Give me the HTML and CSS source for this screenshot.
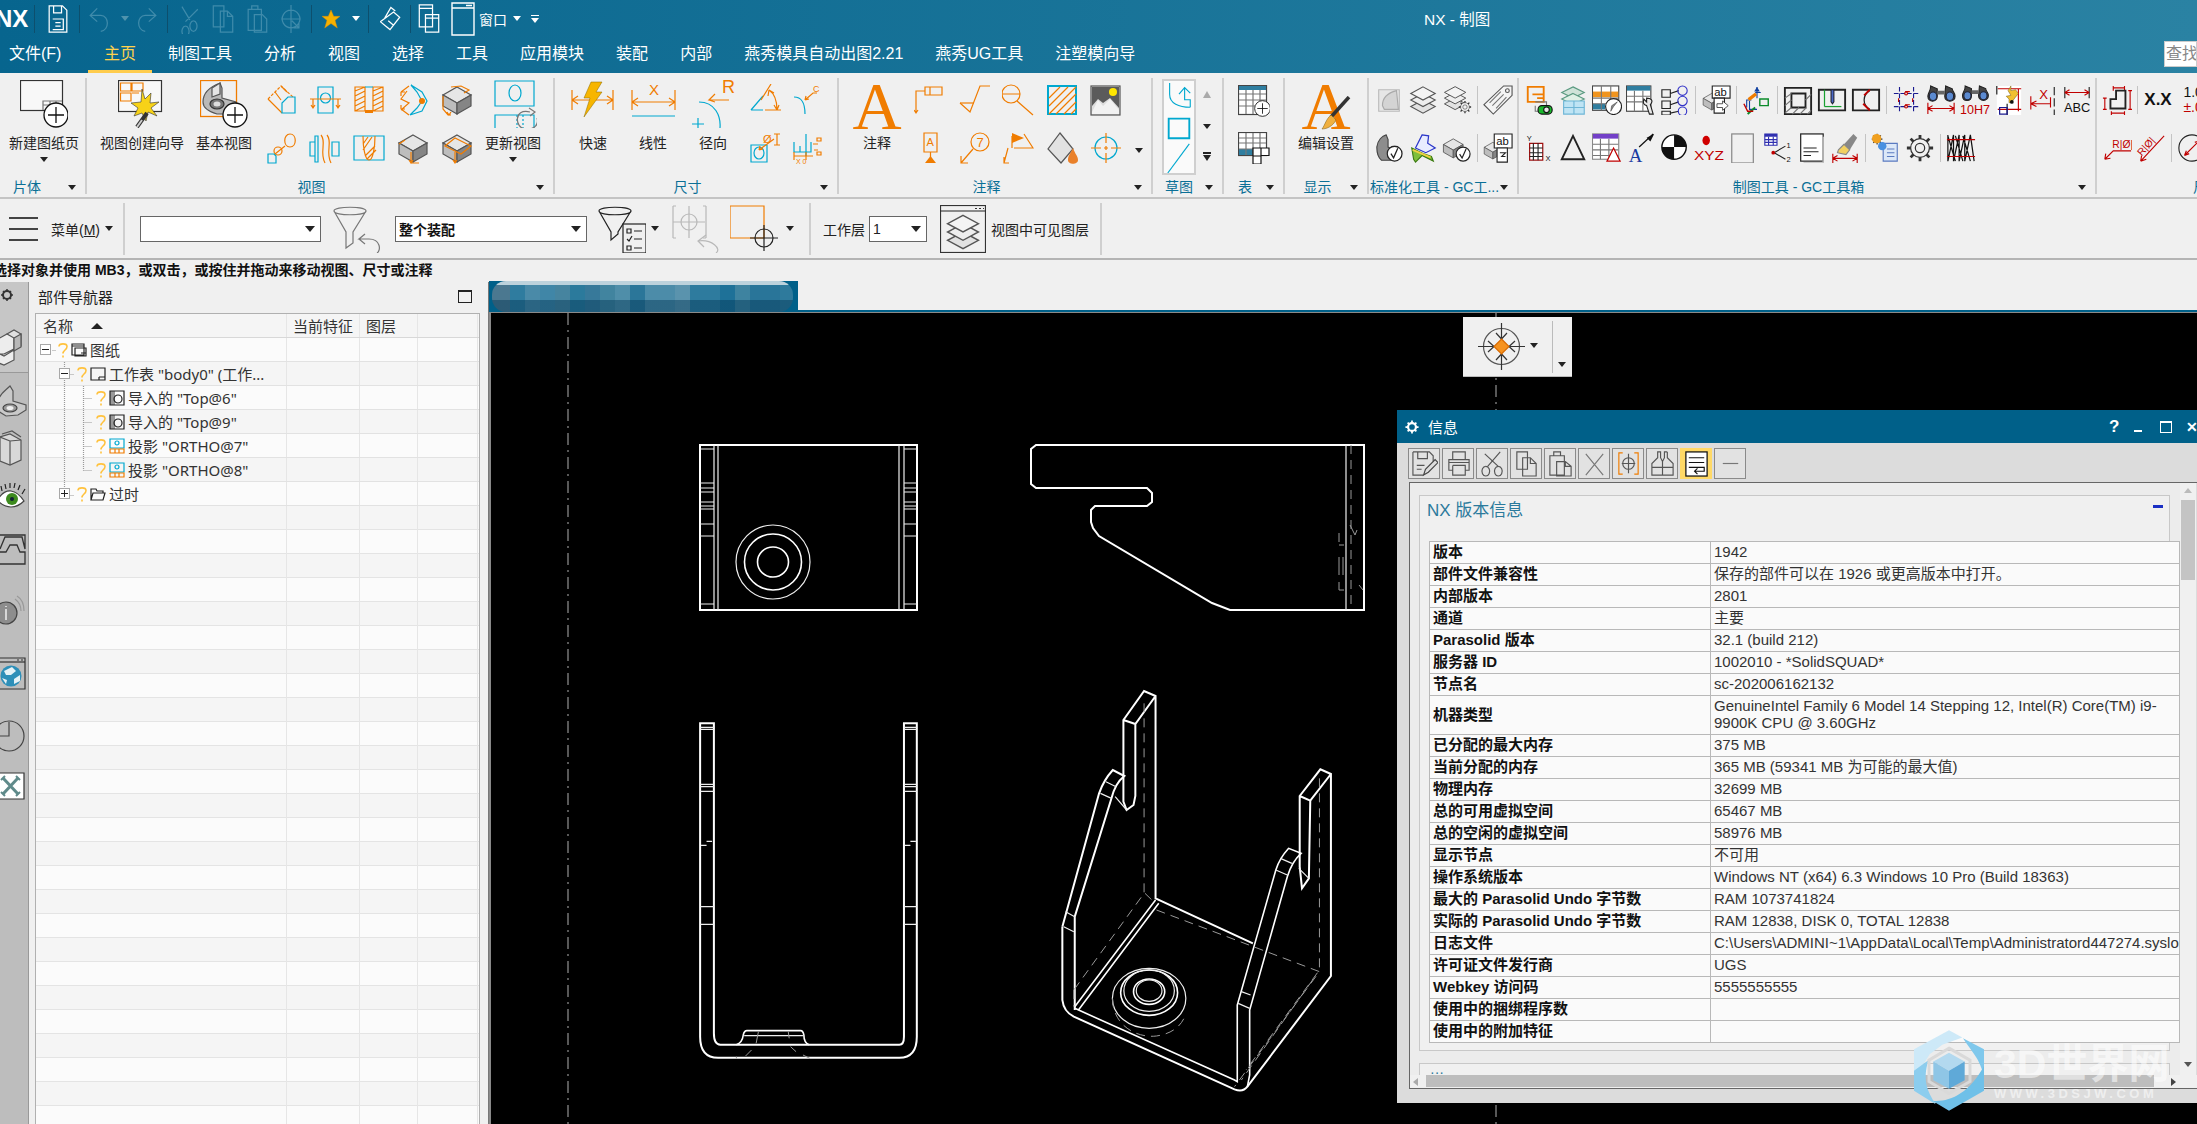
FILE: index.html
```html
<!doctype html>
<html lang="zh-CN">
<head>
<title>NX - 制图</title>
<meta charset="UTF-8">
<link rel="stylesheet" href="styles.css">
</head>
<body>

<svg class="defs" width="0" height="0">
  <symbol id="cube" viewBox="0 0 32 32">
    <path d="M16 3 30 11 16 19 2 11z" fill="#e6e6e6" stroke="#555"/>
    <path d="M2 11 16 19V30L2 22z" fill="#bdbdbd" stroke="#555"/>
    <path d="M30 11 16 19V30L30 22z" fill="#858585" stroke="#555"/>
  </symbol>
  <symbol id="plusc" viewBox="0 0 26 26">
    <circle cx="13" cy="13" r="12" fill="#fff" stroke="#111" stroke-width="1.3"/>
    <path d="M5 13H21M13 5V21" stroke="#111" stroke-width="1.3" fill="none"/>
  </symbol>
  <symbol id="checkc" viewBox="0 0 16 16">
    <circle cx="8" cy="8" r="7" fill="#fff" stroke="#222"/>
    <path d="M4.500 8 7 12 11 3" stroke="#222" fill="none"/>
  </symbol>
  <symbol id="layers" viewBox="0 0 32 32">
    <path d="M16 16 29 23 16 30 3 23z" fill="#e2e2e2" stroke="#555"/>
    <path d="M16 9 29 16 16 23 3 16z" fill="#eee" stroke="#555"/>
    <path d="M16 2 29 9 16 16 3 9z" fill="#f4f4f4" stroke="#555"/>
  </symbol>
  <symbol id="gear" viewBox="0 0 32 32">
    <circle cx="16" cy="16" r="10" fill="#f2f2f2" stroke="#333" stroke-width="1.300"/>
    <circle cx="16" cy="16" r="5" fill="#f0f0f0" stroke="#333" stroke-width="1.300"/>
    <path d="M16 2V6M16 26V30M2 16H6M26 16H30M6 6 9 9M23 23 26 26M26 6 23 9M9 23 6 26" stroke="#333" stroke-width="3" fill="none"/>
  </symbol>
  <symbol id="qmark" viewBox="0 0 10 16">
    <path d="M1 4.500C1 1 9 1 9 4.500 9 8 5 8 5 11.500M5 13.500V15.500" stroke="#ffc23e" stroke-width="1.600" fill="none"/>
  </symbol>
  <symbol id="binoc" viewBox="0 0 32 20">
    <path d="M5 1 12 4V12C12 19 2 19 2 12 2 8 5 7 5 1zM21 1 28 4C28 7 31 8 31 12 31 19 20 19 20 12z" fill="#444" stroke="#222"/>
    <path d="M12 6H20V10H12z" fill="#666"/>
    <ellipse cx="7.500" cy="12" rx="4" ry="4.500" fill="#5b8ad0" stroke="#223"/>
    <ellipse cx="25.500" cy="12" rx="4" ry="4.500" fill="#5b8ad0" stroke="#223"/>
  </symbol>
</svg>

<header class="appbar">
  <div class="titlerow">
    <span class="logo">NX</span>
    <span class="qa-sep"></span>
    <svg class="qa w-save" viewBox="0 0 24 34"><path class="w" d="M2 2H17L22 7V32H2zM7 2V10H16V2M6 17H18V29H6M9 21H15M9 25H15"/></svg>
    <span class="qa-sep s1"></span>
    <svg class="qa w-undo" viewBox="0 0 24 34"><path class="d" d="M10 5 2 13 10 20M2 13H14C24 13 24 30 14 31"/></svg>
    <span class="qa-caret dim"></span>
    <svg class="qa w-redo" viewBox="0 0 24 34"><path class="d" d="M14 5 22 13 14 20M22 13H10C0 13 0 30 10 31"/></svg>
    <span class="qa-sep s2"></span>
    <svg class="qa w-tool" viewBox="0 0 24 34"><path class="d" d="M4 3 13 18M22 6 8 20M8 25a4 6 0 1 0 .1 0M17 19a4 6 0 1 0 .1 0"/></svg>
    <svg class="qa w-tool g1" viewBox="0 0 24 34"><path class="d" d="M1 2H13V26H1zM9 8H17L23 14V32H9zM17 8V14H23"/></svg>
    <svg class="qa w-tool g1" viewBox="0 0 24 34"><path class="d" d="M2 6H17V30H2zM6 6V2H13V6M9 12H18L23 17V32H9z"/></svg>
    <svg class="qa w-tool g1" viewBox="0 0 24 34"><path class="d" d="M12 1V33M1 17H23M12 7a10 10 0 1 0 .1 0M13 19 21 27M21 21V27H15"/></svg>
    <span class="qa-sep s3"></span>
    <svg class="qa w-star" viewBox="0 0 20 22"><path d="M10 1 13 8H20L14.500 12.500 17 21 10 16 3 21 5.500 12.500 0 8H7z" fill="#f6b100" stroke="#e08a00" stroke-width=".5"/></svg>
    <span class="qa-caret"></span>
    <span class="qa-sep s4"></span>
    <svg class="qa w-tool" viewBox="0 0 24 34"><path class="w" d="M1 20 16 9 23 15 12 29 7 25M6 16 13 4 18 8M10 19 16 24M1 20 7 25"/></svg>
    <span class="qa-sep s5"></span>
    <svg class="qa w-tool w-win1" viewBox="0 0 24 34"><path class="w" d="M1 1H16V26H1zM1 5H16M8 12H23V32H8zM8 16H23"/></svg>
    <svg class="qa w-win" viewBox="0 0 24 34"><path class="w" d="M1 1H23V33H1zM1 6H23M15 3.500H21"/></svg>
    <span class="qa-text">窗口</span>
    <span class="qa-caret c1"></span>
    <span class="qa-more"></span>
    <span class="apptitle">NX - 制图</span>
  </div>
  <nav class="tabrow">
    <span class="tab first">文件(F)</span>
    <span class="tab active">主页</span>
    <span class="tab">制图工具</span>
    <span class="tab">分析</span>
    <span class="tab">视图</span>
    <span class="tab">选择</span>
    <span class="tab">工具</span>
    <span class="tab">应用模块</span>
    <span class="tab">装配</span>
    <span class="tab">内部</span>
    <span class="tab">燕秀模具自动出图2.21</span>
    <span class="tab">燕秀UG工具</span>
    <span class="tab">注塑模向导</span>
    <span class="search">查找命令</span>
  </nav>
</header>

<section class="ribbon">

  <!-- 片体 -->
  <div class="rgroup g-sheet">
    <div class="rbody">
      <div class="bigbtn b-new">
        <svg class="big" viewBox="0 0 48 48"><rect x=".5" y=".5" width="42" height="30" fill="#f8f8f8" stroke="#333"/><path class="g" d="M23 30V21H42M30 21V30M36 21V30M23 25H42"/><use href="#plusc" x="23" y="22" width="26" height="26"/></svg>
        <span>新建图纸页</span><i class="caret"></i>
      </div>
    </div>
    <div class="rfoot"><span class="rlabel">片体</span><i class="caret"></i></div>
  </div>

  <!-- 视图 -->
  <div class="rgroup g-view">
    <div class="rbody">
      <div class="bigbtn b-wizard">
        <svg class="big" viewBox="0 0 48 48"><rect x=".5" y=".5" width="43" height="31" fill="#f8f8f8" stroke="#333"/><path class="o" d="M2.500 3H13V11H2.500zM14 3H25V11H14zM2.500 13H13V21H2.500zM14 13H21"/><path d="M24 9 27 19 33 13 32 23 41 22 33 28 39 36 30 32 28 41 24 33 16 36 20 28 13 23 23 22z" fill="#f7d218" stroke="#333" stroke-width=".6"/><path d="M19 47 29 33" stroke="#333" stroke-width="4"/><path d="M19 47 24 40" stroke="#ccc" stroke-width="2"/></svg>
        <span>视图创建向导</span>
      </div>
      <div class="bigbtn b-basic">
        <svg class="big" viewBox="0 0 48 48"><rect x=".5" y=".5" width="36" height="36" fill="none" stroke="#f07c00" stroke-width="1.300"/><path d="M3 22C3 12 12 6 20 3L22 8V18L36 22V27L27 34 17 34C10 32 3 28 3 22z" fill="#b9b9b9" stroke="#555"/><path d="M12 17V8L20 3V14z" fill="#e5e5e5" stroke="#555"/><ellipse cx="17" cy="24" rx="7" ry="5" fill="#777" stroke="#333"/><ellipse cx="17" cy="24" rx="3.500" ry="2.500" fill="#ddd"/><use href="#plusc" x="22" y="22" width="26" height="26"/></svg>
        <span>基本视图</span>
      </div>
      <div class="smallgrid cols5">
        <svg class="i" viewBox="0 0 32 32"><path class="o" stroke-dasharray="3 1.500" d="M3 15 16 2 29 14"/><path class="o" d="M3 15 17 29M10 8 16 16M16 2 22 8"/><path class="c" d="M17 29V19L23 13H30V29z"/></svg>
        <svg class="i" viewBox="0 0 32 32"><path class="c" d="M9 3H24V29H9z"/><circle class="c" cx="16.500" cy="14" r="5"/><path class="o" d="M1 15H32M4 15V24M2 21 4 24 6 21M29 15V24M27 21 29 24 31 21"/></svg>
        <svg class="i" viewBox="0 0 32 32"><path class="o" d="M2 3H12V27H2zM20 3H30V27H20zM2 7 12 3M2 12 12 7M2 17 12 12M2 22 12 17M2 27 12 22M20 7 30 3M20 12 30 7M20 17 30 12M20 22 30 17M20 27 30 22"/><path class="c" d="M12 3H20M12 27H20"/><path d="M12 26H20V29H12z" fill="#f07c00"/></svg>
        <svg class="i" viewBox="0 0 32 32"><path class="c" d="M14 1 25 8 30 17 25 27 13 31M14 1 20 8 25 17 20 24 13 31"/><path class="o" d="M4 8 12 2M4 8V12M4 8H8M4 25 12 31M4 25V21M4 25H8M10 7 4 15 12 19 4 26"/><circle cx="25" cy="17" r="3" fill="#f07c00"/></svg>
        <svg class="i" viewBox="0 0 32 32"><use href="#cube" width="32" height="32"/><path class="o" d="M10 3 20 2 28 6 23 9M2 12 2 25 7 31 10 31M6 28 8 31 10 28"/></svg>
        <svg class="i" viewBox="0 0 32 32"><path class="o" d="M25 2C32 2 32 15 25 15 18 15 18 2 25 2M20 14 10 22"/><circle class="o" cx="13" cy="19" r="4"/><path class="c" d="M3 22H9L11 24V31H3z"/></svg>
        <svg class="i" viewBox="0 0 32 32"><path class="c" d="M1 10H6V24H1zM6 4H9V30H6zM23 10H30V24H23z"/><path class="o" d="M12 3C18 10 10 20 16 31M18 3C24 10 16 20 22 31"/></svg>
        <svg class="i" viewBox="0 0 32 32"><path class="c" d="M1 4H31V28H1z"/><path class="o" d="M10 4C10 15 12 28 16 28 20 28 22 15 22 4M12 24 22 14M14 27 23 18M10 18 19 5M10 12 15 5"/></svg>
        <svg class="i" viewBox="0 0 32 32"><use href="#cube" width="32" height="32"/><path class="o" d="M22 31 14 31 14 20M12 28 14 31 16 28M2 12 8 8"/></svg>
        <svg class="i" viewBox="0 0 32 32"><use href="#cube" width="32" height="32"/><path class="o" d="M4 14 20 22 30 14 14 6zM14 20V31M12 28 14 31 16 28"/></svg>
      </div>
      <div class="bigbtn b-update">
        <svg class="big" viewBox="0 0 48 48"><path class="c" d="M6 1H45V26H6zM6 35H45V49H6z"/><ellipse class="c" cx="26" cy="13" rx="6" ry="8"/><path class="c" stroke-dasharray="2 2" d="M28 35V48M34 35V48"/><path class="g" d="M41 32C24 28 26 48 36 49 46 50 50 44 48 38M40 28 46 32 41 36"/></svg>
        <span>更新视图</span><i class="caret"></i>
      </div>
    </div>
    <div class="rfoot"><span class="rlabel">视图</span><i class="caret"></i></div>
  </div>

  <!-- 尺寸 -->
  <div class="rgroup g-dim">
    <div class="rbody">
      <div class="bigbtn b-dim">
        <svg class="big" viewBox="0 0 48 48"><path class="o" d="M3 10V30M44 10V30M3 20H44M3 20 9 16M3 20 9 24M44 20 38 16M44 20 38 24"/><path d="M22 2H33L27 12H33L15 37 21 18H15z" fill="#f7b500" stroke="#8a6a00" stroke-width=".5"/></svg>
        <span>快速</span>
      </div>
      <div class="bigbtn b-dim">
        <svg class="big" viewBox="0 0 48 48"><path class="o" d="M3 10V30M46 10V30M3 22H46M3 22 9 18M3 22 9 26M46 22 40 18M46 22 40 26"/><text class="tx-o" x="20" y="15" font-size="15">X</text><path class="c" d="M3 36H46"/></svg>
        <span>线性</span>
      </div>
      <div class="bigbtn b-dim">
        <svg class="big" viewBox="0 0 48 48"><path class="c" d="M10 22C26 22 32 36 31 48M3 44H15M9 38V50"/><path class="o" d="M26 14 20 20H40M20 20 26 22"/><text class="tx-o" x="33" y="13" font-size="18">R</text></svg>
        <span>径向</span>
      </div>
      <div class="smallgrid cols2">
        <svg class="i" viewBox="0 0 32 32"><path class="c" d="M2 26 14 12M2 26H14"/><path class="o" d="M12 16 22 0M16 26H32M20 6C26 10 28 18 28 26M20 6 19 12M20 6 25 9M28 26 25 21M28 26 30 21"/></svg>
        <svg class="i" viewBox="0 0 32 32"><path class="c" d="M3 13C10 13 14 18 14 30"/><path class="o" d="M14 16 22 9H26M14 16 15 12M14 16 18 15"/><text class="tx-o" x="22" y="8" font-size="9">C</text></svg>
        <svg class="i" viewBox="0 0 32 32"><path class="c" d="M2 13H18V30H2z"/><ellipse class="c" cx="10" cy="21" rx="5" ry="6"/><path class="o" d="M10 18 25 7M10 18 11 14M10 18 14 17M28 2V13M25 2H31M25 13H31"/><text class="tx-o" x="14" y="11" font-size="11">Ø</text></svg>
        <svg class="i" viewBox="0 0 32 32"><path class="c" d="M3 10V20H20V10M15 2V24M9 14V20"/><path class="o" d="M3 24H22M3 20V28M15 20V28M22 12H27M23 18H27M26 6H30V9H26zM26 20H30V23H26z"/><text class="tx-o" x="5" y="32" font-size="7">X 0</text></svg>
      </div>
    </div>
    <div class="rfoot"><span class="rlabel">尺寸</span><i class="caret"></i></div>
  </div>

  <!-- 注释 -->
  <div class="rgroup g-note">
    <div class="rbody">
      <div class="bigbtn b-note">
        <span class="bigA">A</span>
        <span>注释</span>
      </div>
      <div class="smallgrid cols5">
        <svg class="i" viewBox="0 0 32 32"><path class="o" d="M11 3H28V11H11zM16 3V11M11 7H2V29M0 26 2 29 4 26"/></svg>
        <svg class="i" viewBox="0 0 32 32"><path class="o" d="M2 19 12 28 22 2H32"/><path class="o" d="M2 19H16"/></svg>
        <svg class="i" viewBox="0 0 32 32"><circle class="o" cx="9" cy="10" r="9"/><path class="o" d="M0 10H18M15 17 31 31"/></svg>
        <svg class="i" viewBox="0 0 32 32"><path class="c sw2" d="M2 2H30V30H2z"/><path class="o" d="M3 14 14 3M3 22 22 3M3 30 30 3M10 30 30 10M18 30 30 18M25 30 30 25"/></svg>
        <svg class="i" viewBox="0 0 32 32"><rect x="1" y="2" width="29" height="29" fill="#ddd" stroke="#555"/><path d="M2 3H29V24L20 14 13 19 8 15 2 22z" fill="#5b5b5b"/><path d="M2 28 8 16 13 22 20 15 29 26V30H2z" fill="#f2f2f2"/><circle cx="23" cy="8" r="4" fill="#ffe600"/></svg>
        <svg class="i" viewBox="0 0 32 32"><path class="o" d="M10 1H23V20H10zM16.500 20V25"/><path d="M11 31 16.500 24 22 31z" fill="#f07c00"/><text class="tx-o" x="12.500" y="14" font-size="11">A</text></svg>
        <svg class="i" viewBox="0 0 32 32"><circle class="o" cx="22" cy="10" r="9"/><path class="o" d="M15 17 3 31M3 24V31H10"/><text class="tx-o" x="18.500" y="15" font-size="13">7</text></svg>
        <svg class="i" viewBox="0 0 32 32"><path class="o" d="M10 4V16M12 16H31L22 2M6 16 2 31M2 25V31H7"/><path d="M10 1 22 6 10 11z" fill="#f07c00"/></svg>
        <svg class="i" viewBox="0 0 32 32"><path d="M14 1 27 17 15 31 2 17z" fill="#e2e2e2" stroke="#555"/><path d="M27 16C24 22 22 24 22 28 22 33 32 33 32 28 32 24 29 22 27 16z" fill="#e9802a"/></svg>
        <svg class="i" viewBox="0 0 32 32"><circle class="c" cx="16" cy="16" r="11"/><path class="o" d="M16 1V11M16 14V18M16 21V31M1 16H11M14 16H18M21 16H31"/></svg>
      </div>
      <i class="caret note-more"></i>
    </div>
    <div class="rfoot"><span class="rlabel">注释</span><i class="caret"></i></div>
  </div>

  <!-- 草图 -->
  <div class="rgroup g-sketch">
    <div class="rbody">
      <div class="sketchbox">
        <svg class="i-s" viewBox="0 0 28 32"><path class="c" d="M4 2V14C4 24 14 28 26 28M14 14 20 7 26 13M20 7V20H26V28"/></svg>
        <svg class="i-s" viewBox="0 0 28 32"><path class="c sw2" d="M3 7H25V28H3z"/></svg>
        <svg class="i-s" viewBox="0 0 28 32"><path class="c" d="M2 32 25 1"/></svg>
      </div>
      <div class="sketchspin">
        <i class="caret up"></i>
        <i class="caret"></i>
        <i class="caret more"></i>
      </div>
    </div>
    <div class="rfoot"><span class="rlabel">草图</span><i class="caret"></i></div>
  </div>

  <!-- 表 -->
  <div class="rgroup g-table">
    <div class="rbody">
      <div class="tablecol">
        <svg class="i" viewBox="0 0 32 32"><rect x=".5" y=".5" width="28" height="29" fill="#fff" stroke="#444"/><path d="M1 1H28V5H1z" fill="#2f7ea0"/><path class="g" d="M1 9H28M1 15H28M1 21H28M8 5V29M15 5V29M22 5V29"/><use href="#plusc" x="16" y="15" width="17" height="17"/></svg>
        <svg class="i" viewBox="0 0 32 32"><rect x=".5" y=".5" width="28" height="23" fill="#fff" stroke="#444"/><path d="M1 17H16V23H1z" fill="#2f7ea0"/><path class="g" d="M1 6H28M1 11H28M1 17H28M8 1V23M15 1V23M22 1V23"/><path d="M15 16H31V23.500H23V32H15zM23 16V24M15 24H23" fill="#fff" stroke="#111"/></svg>
      </div>
    </div>
    <div class="rfoot"><span class="rlabel">表</span><i class="caret"></i></div>
  </div>

  <!-- 显示 -->
  <div class="rgroup g-show">
    <div class="rbody">
      <div class="bigbtn b-show">
        <span class="bigA showA">A
          <svg class="brush" viewBox="0 0 30 34"><path d="M28 1 10 21" stroke="#333" stroke-width="3.500"/><path d="M10 19 15 24C12 30 6 33 1 33 4 29 5 23 10 19z" fill="#f0b040" stroke="#7a5a10" stroke-width=".5"/></svg>
        </span>
        <span>编辑设置</span>
      </div>
    </div>
    <div class="rfoot"><span class="rlabel">显示</span><i class="caret"></i></div>
  </div>

  <!-- 标准化工具 -->
  <div class="rgroup g-std">
    <div class="rbody toolcol">
      <div class="toolrow">
        <span class="t"><svg class="i" viewBox="0 0 32 32"><path d="M5 5H27V28H5z" fill="#e6e6e6" stroke="#bbb"/><path d="M9 22C9 12 16 8 24 6L26 26H11z" fill="#d4d4d4" stroke="#aaa"/></svg></span>
        <span class="t"><svg class="i" viewBox="0 0 32 32"><use href="#layers" width="32" height="32"/></svg></span>
        <span class="t"><svg class="i" viewBox="0 0 32 32"><use href="#layers" width="28" height="28"/><use href="#gear" x="17" y="16" width="15" height="15"/></svg></span>
        <i class="tsep"></i>
        <span class="t"><svg class="i" viewBox="0 0 32 32"><path d="M22 1H31V11L11 31 1 21z" fill="#f4f4f4" stroke="#555"/><path class="g" d="M7 19 19 7M10 22 22 10M14 25 25 13"/><circle cx="26" cy="6" r="2" fill="none" stroke="#555"/></svg></span>
      </div>
      <div class="toolrow">
        <span class="t"><svg class="i" viewBox="0 0 32 32"><path d="M3 15C4 7 9 3 13 2L15 7V15L24 20V24L18 29H8C4 26 3 22 3 15z" fill="#8d8d8d" stroke="#444"/><use href="#checkc" x="13" y="13" width="18" height="18"/></svg></span>
        <span class="t"><svg class="i" viewBox="0 0 32 32"><path d="M15 2 22 3 21 11 29 16 19 21 8 16z" fill="#e8ecff" stroke="#2a35c8" stroke-width="1.300"/><path d="M6 28 4 16 16 22 25 25 27 30 15 24 8 31z" fill="#7fbf3a" stroke="#3a7a10"/><path d="M5 18 24 26" stroke="#f0d040" stroke-width="2"/></svg></span>
        <span class="t"><svg class="i" viewBox="0 0 32 32"><use href="#cube" y="1" width="24" height="30"/><use href="#checkc" x="14" y="14" width="17" height="17"/></svg></span>
        <i class="tsep"></i>
        <span class="t"><svg class="i" viewBox="0 0 32 32"><use href="#cube" y="8" width="21" height="21"/><path d="M12 1H31V16H12z" fill="#fff" stroke="#222"/><text class="tx-k" x="14" y="13" font-size="12">ab</text><path d="M15 16H26V31H15z" fill="#fff" stroke="#222"/><path d="M18 21H24L20 25H24" stroke="#222" fill="none"/></svg></span>
      </div>
    </div>
    <div class="rfoot std"><span class="rlabel">标准化工具 - GC工...</span><i class="caret"></i></div>
  </div>

  <!-- 制图工具 - GC工具箱 -->
  <div class="rgroup g-gc">
    <div class="rbody toolcol">
      <div class="toolrow">
        <span class="t"><svg class="i" viewBox="0 0 32 32"><path class="o sw2" d="M4 2H21V18H4zM9 10H21M14 14H21"/><path class="g" d="M12 18H24V22M12 22V28H20"/><rect x="15" y="22" width="15" height="9" rx="4" fill="#19b82c" stroke="#111"/><circle cx="24" cy="26.500" r="3" fill="#e8e8e8" stroke="#111"/></svg></span>
        <span class="t"><svg class="i" viewBox="0 0 32 32"><path d="M16 2 28 8 16 14 4 8z" fill="#cfe3d8" stroke="#5a9a80"/><path d="M16 9 28 15 16 21 4 15z" fill="#dff0e5" stroke="#5a9a80"/><path d="M6 17H28V31H6z" fill="#bfe4f4" stroke="#6fb6d6"/><path d="M17 17V31M6 24H28" stroke="#6fb6d6"/></svg></span>
        <span class="t"><svg class="i" viewBox="0 0 32 32"><rect x=".5" y="1" width="28" height="26" fill="#fff" stroke="#444"/><path d="M1 7H28V13H1z" fill="#f0941e"/><path d="M1 20H14V26H1z" fill="#2f7ea0"/><path class="g" d="M1 14H28M1 20H28M10 1V27M20 1V27"/><circle cx="23" cy="23" r="8.500" fill="#fff" stroke="#222"/><path d="M27 18 21 22 20 28 23 23z" fill="#888" stroke="#222" stroke-width=".5"/></svg></span>
        <span class="t"><svg class="i" viewBox="0 0 32 32"><rect x=".5" y="1" width="26" height="27" fill="#fff" stroke="#444"/><path d="M1 1H26V6H1z" fill="#2f7ea0"/><path class="g" d="M1 12H26M1 18H26M9 6V28M18 6V28"/><path d="M22 14C26 14 30 16 26 21L29 31H25L22 22C18 21 18 18 19 15L22 18z" fill="#e8e8e8" stroke="#222"/></svg></span>
        <span class="t"><svg class="i" viewBox="0 0 32 32"><path class="k" d="M2 5H11V13H2zM2 17H11V25H2zM2 28H11V32H2zM11 9 20 6M11 21 20 18M11 30 20 28"/><circle cx="24" cy="6" r="5" fill="none" stroke="#3535c8"/><circle cx="24" cy="17" r="5" fill="none" stroke="#3535c8"/><circle cx="24" cy="28" r="4.500" fill="none" stroke="#3535c8"/></svg></span>
        <i class="tsep"></i>
        <span class="t"><svg class="i" viewBox="0 0 32 32"><use href="#cube" x="1" y="7" width="21" height="21"/><path d="M12 1H31V14H12z" fill="#fff" stroke="#222"/><text class="tx-k" x="14" y="12" font-size="12">ab</text><path d="M14 14H25V30H14z" fill="#fff" stroke="#222"/><path d="M17 20H23V17L29 22 23 27V24H17z" fill="#fff" stroke="#222" stroke-width=".8"/></svg></span>
        <i class="tsep"></i>
        <span class="t"><svg class="i" viewBox="0 0 32 32"><path d="M16 2V14M5 24V16H10M20 8H14M8 17V26H16" stroke="#1040a0" fill="none"/><path d="M6 14 14 8 16 11 8 17z" fill="#f07c00"/><path d="M16 2 13 7H19z" fill="#1040a0"/><path d="M19 15H28V22H19z" fill="none" stroke="#0a8a2a" stroke-width="1.500"/><path d="M6 31 14 24" stroke="#0a8a2a" stroke-width="2"/><path d="M2 20 6 28H12" stroke="#c00000" stroke-width="1.500" fill="none"/></svg></span>
        <i class="tsep"></i>
        <span class="t"><svg class="i" viewBox="0 0 32 32"><path class="k sw2" d="M2 3H30V31H2zM9 9H24V24H9z"/><path class="g" d="M2 14 9 9M2 22 9 16M2 30 9 24M10 31 17 24M18 31 25 24M26 31 30 27M24 16 30 10"/></svg></span>
        <span class="t"><svg class="i" viewBox="0 0 32 32"><path class="k sw2" d="M2 5H30V27H2z"/><path d="M8 23H26" stroke="#19a030" stroke-width="1.300"/><path d="M8 23V5" stroke="#19a030" stroke-width="1.300"/><path d="M15 5H18V18L16.500 20 15 18z" fill="#4a6ac8" stroke="#223"/></svg></span>
        <span class="t"><svg class="i" viewBox="0 0 32 32"><path class="k sw2" d="M2 5H30V27H2z"/><path d="M20 6C12 11 12 21 20 26" fill="none" stroke="#222" stroke-width="1.300"/><path d="M20 5 14 11M13 20 20 27" stroke="#c00000" stroke-width="2" fill="none"/></svg></span>
        <i class="tsep"></i>
        <span class="t"><svg class="i" viewBox="0 0 32 32"><path d="M2 9H30M2 23H30M8 2V30M23 2V30" stroke="#1a1a90" stroke-dasharray="5 2" fill="none"/><path d="M14 7H19M14 21H19M7 14V18M22 14V18" stroke="#c00000" fill="none"/><circle cx="15" cy="9" r="1.500" fill="none" stroke="#c00000"/><circle cx="15" cy="23" r="1.500" fill="none" stroke="#c00000"/></svg></span>
        <span class="t"><svg class="i" viewBox="0 0 32 32"><use href="#binoc" y="0" width="32" height="20"/><path class="r" d="M2 19V31M30 19V31M2 25H30M2 25 7 22M2 25 7 28M30 25 25 22M30 25 25 28"/></svg></span>
        <span class="t"><svg class="i" viewBox="0 0 32 32"><use href="#binoc" y="0" width="32" height="19"/><text class="tx-r" x="0" y="31" font-size="13" textLength="32" lengthAdjust="spacingAndGlyphs">10H7</text></svg></span>
        <span class="t"><svg class="i" viewBox="0 0 32 32"><path d="M3 1H29V32H3z" fill="#fff"/><path class="r" d="M4 4H29M26 4V28M4 26H29"/><path d="M18 1V6L23 5 26 9 19 18 16 19V15L13 12 18 11 15 6z" fill="#f0c030" stroke="#6a5010" stroke-width=".5"/><path d="M3 1V10M14 20V32" stroke="#111" fill="none"/><circle cx="19" cy="18" r="2" fill="#111"/><path d="M6 24H14V31H6z" fill="none" stroke="#1a1a90" stroke-width="1.300"/></svg></span>
        <span class="t"><svg class="i" viewBox="0 0 32 32"><path class="k" stroke-dasharray="9 3" d="M28 2V32"/><path class="r" d="M3 12V26M3 20H24M3 20 9 17M3 20 9 23M24 13V24"/><text class="tx-r" x="12" y="15" font-size="14">X</text></svg></span>
        <span class="t"><svg class="i" viewBox="0 0 32 32"><path class="k" d="M3 2V14M29 2V14"/><path class="r" d="M3 8H29M3 8 8 5M3 8 8 11M29 8 24 5M29 8 24 11"/><text class="tx-k" x="2" y="29" font-size="13.500" textLength="28" lengthAdjust="spacingAndGlyphs">ABC</text></svg></span>
      </div>
      <div class="toolrow">
        <span class="t"><svg class="i" viewBox="0 0 32 32"><text class="tx-k" x="3" y="8" font-size="8">Y</text><path d="M6 11H20V29H6z" fill="#fff" stroke="#a01010" stroke-width="1.300"/><path d="M10 11V29M15 11V29M6 16H20M6 21H20M6 25H20" stroke="#222" fill="none"/><text class="tx-k" x="23" y="30" font-size="8">X</text></svg></span>
        <span class="t"><svg class="i" viewBox="0 0 32 32"><path class="k sw2" d="M16 3 28 28H4z"/></svg></span>
        <span class="t"><svg class="i" viewBox="0 0 32 32"><rect x=".5" y="1" width="28" height="27" fill="#fff" stroke="#888"/><path d="M1 1H28V6H1z" fill="#7340c8"/><path class="g" d="M1 12H28M1 18H28M1 24H28M9 6V28M18 6V28"/><path d="M23 16 30 30H16z" fill="#fff" stroke="#c00000" stroke-width="1.300"/></svg></span>
        <span class="t"><svg class="i" viewBox="0 0 32 32"><text class="tx-b" x="3" y="31" font-size="20">A</text><path d="M14 15 29 1" stroke="#111" stroke-width="1.300"/><path d="M30 1 22 5 26 9z" fill="#111"/></svg></span>
        <span class="t"><svg class="i" viewBox="0 0 32 32"><circle cx="15" cy="15" r="13" fill="#fff" stroke="#111" stroke-width="1.500"/><path d="M15 2A13 13 0 0 1 28 15H15zM15 15H2A13 13 0 0 0 15 28z" fill="#111"/></svg></span>
        <span class="t"><svg class="i" viewBox="0 0 32 32"><ellipse cx="13" cy="8" rx="4" ry="5" fill="#d00000"/><text class="tx-r" x="0" y="29" font-size="14.500" textLength="32" lengthAdjust="spacingAndGlyphs">XYZ</text></svg></span>
        <span class="t"><svg class="i" viewBox="0 0 32 32"><rect x="4" y="1" width="23" height="31" fill="#f0f0f0" stroke="#888" stroke-width="1.300"/></svg></span>
        <span class="t"><svg class="i" viewBox="0 0 32 32"><path d="M3 1H16V13H3z" fill="#fff" stroke="#3030b0"/><path d="M3 1H16V4H3z" fill="#3030b0"/><path d="M7 4V13M12 4V13M3 7H16M3 10H16" stroke="#3030b0" fill="none"/><path class="k" d="M25 14 13 21 25 28"/><circle cx="12" cy="21" r="2" fill="#c00000"/><text class="tx-k" x="26" y="16" font-size="8">1</text><text class="tx-k" x="26" y="31" font-size="8">2</text></svg></span>
        <span class="t"><svg class="i" viewBox="0 0 32 32"><rect x="5" y="1" width="24" height="29" fill="#fff" stroke="#222" stroke-width="1.300"/><path d="M29 4V32H8" stroke="#bbb" stroke-width="1.500" fill="none"/><path d="M8 16H22M8 20H24M8 24H16" stroke="#222" stroke-width="1.300" fill="none"/></svg></span>
        <span class="t"><svg class="i" viewBox="0 0 32 32"><path d="M25 1 15 12 21 18 29 5z" fill="#888"/><path d="M15 12 9 18 8 21 17 23 21 18z" fill="#f2d060" stroke="#888"/><path class="r" d="M3 22V32M29 22V32M3 27H29M3 27 8 24M3 27 8 30M29 27 24 24M29 27 24 30"/></svg></span>
        <i class="tsep"></i>
        <span class="t"><svg class="i" viewBox="0 0 32 32"><path d="M13 11H28V30H13z" fill="#dce8f8" stroke="#5a7ac0"/><path d="M17 17H25M17 21H25M17 25H25" stroke="#5a7ac0"/><use href="#gear" x="0" y="0" width="13" height="13"/><circle cx="6" cy="6" r="5" fill="#f0a020"/><circle cx="12" cy="14" r="4.500" fill="#4a90e0"/></svg></span>
        <span class="t"><svg class="i" viewBox="0 0 32 32"><use href="#gear" width="32" height="32"/></svg></span>
        <i class="tsep"></i>
        <span class="t"><svg class="i" viewBox="0 0 32 32"><path d="M2 2V30L8 2V30L14 2V30L20 2V30L26 2 30 30M2 3 10 30M10 3 18 30M18 3 26 30" stroke="#111" stroke-width="1.300" fill="none"/><path class="r" d="M1 7H31M1 25H31"/></svg></span>
      </div>
    </div>
    <div class="rfoot"><span class="rlabel">制图工具 - GC工具箱</span><i class="caret"></i></div>
  </div>

  <!-- 尺寸 (cut off by the window) -->
  <div class="rgroup g-last">
    <div class="rbody toolcol">
      <div class="toolrow">
        <span class="t"><svg class="i" viewBox="0 0 32 32"><path class="r" d="M3 14V26M1 14H5M1 26H5M12 1V6M24 1V6M12 3H24M10 30H24M10 28V32M24 28V32M30 6V26M28 6H32M28 26H32"/><path class="k sw2" d="M9 25V15H15V6H25V25z"/></svg></span>
        <i class="tsep"></i>
        <span class="t"><span class="xx">X.X</span></span>
        <span class="t"><span class="tol">1.00<b>±.05</b></span></span>
      </div>
      <div class="toolrow">
        <span class="t"><svg class="i" viewBox="0 0 32 32"><path class="r" d="M3 28 12 19H31M3 28 4 22M3 28 9 27"/><text class="tx-r" x="11" y="16" font-size="11">R|Ø|</text></svg></span>
        <span class="t"><svg class="i" viewBox="0 0 32 32"><path class="r" d="M5 30 30 3M5 30 6 24M5 30 11 28"/><text class="tx-r tilt" x="0" y="0" font-size="11">R|Ø|</text></svg></span>
        <i class="tsep"></i>
        <span class="t"><svg class="i" viewBox="0 0 32 32"><circle class="k" cx="16" cy="16" r="14"/><path class="r" d="M8 24 24 8M8 24 10 19M8 24 13 22M24 8 19 10M24 8 22 13"/></svg></span>
      </div>
    </div>
    <div class="rfoot"><span class="rlabel">尺寸</span></div>
  </div>
</section>

<section class="toolbar2">
  <svg class="hamb" viewBox="0 0 30 30"><path d="M1 4H30M1 15H30M1 26H30" stroke="#444" stroke-width="2"/></svg>
  <span class="tb-text ml13">菜单(<u>M</u>)</span>
  <i class="caret ml5"></i>
  <i class="tb-sep ml10"></i>
  <div class="combo wide ml15"><i class="caret"></i></div>
  <svg class="tb-ico ml12" viewBox="0 0 48 48"><path class="g" d="M1 6C1 1 33 1 33 6 33 11 1 11 1 6zM1 6 13 27V43L20 38V27L33 6"/><path class="g" d="M36 34 26 34 32 29M26 34 32 39M36 34C48 34 48 46 44 48"/></svg>
  <div class="combo asm ml14"><b>整个装配</b><i class="caret"></i></div>
  <svg class="tb-ico ml11" viewBox="0 0 48 48"><path class="k" d="M1 6C1 1 33 1 33 6 33 11 1 11 1 6zM1 6 13 27V35L20 29V27L33 6"/><rect x="25" y="19" width="23" height="29" fill="#f0f0f0" stroke="#222"/><path class="k" d="M29 24H33V28H29zM29 41H33V45H29zM36 26H44M36 43H44M29 34 31 36 34 31M36 34H44"/></svg>
  <i class="caret ml5"></i>
  <svg class="tb-ico ml13" viewBox="0 0 48 48"><path class="grayl" d="M1 1V33M4 1H1M1 33H4M34 1V33M31 1H34M31 33H34M17 1V33M1 17H33"/><circle class="grayl" cx="17" cy="17" r="8"/><path class="grayl" d="M34 30 26 36 32 42M26 36C40 34 50 44 44 48"/></svg>
  <svg class="tb-ico ml10" viewBox="0 0 48 48"><path class="o" d="M0 1H34V33H0z"/><circle class="k" cx="34" cy="33" r="9"/><path class="k" d="M34 20V46M20 33H48"/></svg>
  <i class="caret ml8"></i>
  <i class="tb-sep ml15"></i>
  <span class="tb-text ml12">工作层</span>
  <div class="combo layer ml4"><span>1</span><i class="caret"></i></div>
  <svg class="tb-box ml13" viewBox="0 0 46 48"><rect x=".5" y=".5" width="45" height="47" fill="none" stroke="#333"/><path class="k" d="M.5 6H45.500"/><path d="M35 3.500H37M39 3.500H41M43 3.500H44" stroke="#333"/><use href="#layers" x="4" y="8" width="38" height="38"/></svg>
  <span class="tb-text ml5">视图中可见图层</span>
  <i class="tb-sep ml11"></i>
</section>

<div class="status"><span>选择对象并使用 MB3，或双击，或按住并拖动来移动视图、尺寸或注释</span></div>

<main class="work">
  <aside class="sidebar">
    <svg class="side s-gear" viewBox="0 0 28 34"><circle cx="7" cy="13" r="4" fill="none" stroke="#333" stroke-width="2"/><path d="M7 7V9M7 17V19M1 13H3M11 13H13M3 9 4.500 10.500M9.500 15.500 11 17M11 9 9.500 10.500M4.500 15.500 3 17" stroke="#333" stroke-width="1.500"/></svg>
    <svg class="side s-part" viewBox="0 0 28 56"><path d="M7 18 14 14 21 18 21 30 14 34 7 30z" fill="#e0e0e0" stroke="#555"/><path d="M-4 24 7 18 14 22V34L4 40-4 36zM4 38 14 33V44L4 49-4 46V38z" fill="#ededed" stroke="#555"/><path d="M14 22 21 18V31L14 35z" fill="#b8b8b8" stroke="#555"/></svg>
    <svg class="side" viewBox="0 0 28 52"><path d="M-2 28C0 20 5 18 10 13L13 18V28L26 32V37L18 42 6 43-2 38z" fill="#c9c9c9" stroke="#555"/><ellipse cx="10" cy="35" rx="7" ry="4" fill="#999" stroke="#444"/><ellipse cx="10" cy="35" rx="3.500" ry="2" fill="#eee"/></svg>
    <svg class="side" viewBox="0 0 28 52"><path d="M0 12 10 9 21 15V35L10 40 0 36z" fill="#d8d8d8" stroke="#555"/><path d="M10 16 21 15M10 16V40M0 12 10 16M2 9 12 6 21 12" fill="none" stroke="#555"/></svg>
    <svg class="side" viewBox="0 0 28 50"><path d="M-2 22C6 10 16 12 24 24 16 32 6 32-2 24z" fill="#fff" stroke="#444"/><circle cx="12" cy="22" r="6" fill="#3d8a1e"/><circle cx="12" cy="22" r="2" fill="#123"/><path d="M2 14 1 9M6 12 5 7M10 11V6M14 11 15 6M18 13 20 8M22 17 25 12" stroke="#222"/></svg>
    <svg class="side" viewBox="0 0 28 54"><path d="M-2 8H25V22L22 10H5L0 22M-2 25H6L10 18H17L20 25H25V37H-2z" fill="none" stroke="#333" stroke-width="1.300"/></svg>
    <svg class="side" viewBox="0 0 28 62"><circle cx="6" cy="32" r="11" fill="#8d8d8d" stroke="#444"/><path d="M6 28V39M6 25V26" stroke="#fff" stroke-width="1.300"/><path d="M15 18C19 21 21 25 21 30M17 15C22 18 24 24 24 30" stroke="#999" fill="none"/></svg>
    <svg class="side" viewBox="0 0 28 62"><path d="M-2 15H25V46H-2z" fill="#bdbdbd" stroke="#333"/><path d="M-2 19H25" stroke="#333"/><path d="M17 17H19M21 17H23" stroke="#333"/><circle cx="11" cy="33" r="10.500" fill="#2e8fb8"/><path d="M4 28 12 24 16 28 11 32 6 32zM14 36 20 32 20 38 14 41zM2 35 7 37 6 41z" fill="#e6f2f6"/></svg>
    <svg class="side" viewBox="0 0 28 58"><circle cx="9" cy="31" r="15" fill="none" stroke="#444" stroke-width="1.200"/><path d="M9 17V31H0" stroke="#444" fill="none"/></svg>
    <svg class="side" viewBox="0 0 28 48"><path d="M-2 10H24V36H-2z" fill="#fff" stroke="#333"/><path d="M3 15 18 31M18 15 3 31" stroke="#5f8a8a" stroke-width="3"/><path d="M1 17 5 13M16 13 20 17M1 29 5 33M16 33 20 29" stroke="#5f8a8a" stroke-width="2"/></svg>
  </aside>

  <section class="nav">
    <div class="nav-head">
      <span>部件导航器</span>
      <i class="nav-max"></i>
    </div>
    <div class="tree">
      <div class="tree-row head">
        <span class="c-name">名称<i class="sort"></i></span>
        <span>当前特征</span>
        <span>图层</span>
        <span></span>
      </div>
      <div class="tree-body">
        <svg class="tree-lines" width="60" height="162"><path d="M16.500 12.500H20M28.500 24V155M28.500 36.500H38M47.500 48V132.500M47.500 60.500H56M47.500 84.500H56M47.500 108.500H56M47.500 132.500H56M28.500 157.500H38" stroke="#999" stroke-dasharray="1 1" fill="none"/></svg>
        <div class="tree-row lv0"><span class="c-name"><i class="exp minus"></i><svg class="q" viewBox="0 0 10 16"><use href="#qmark"/></svg><svg class="ti" viewBox="0 0 16 16"><path class="k" d="M1 2H13V13H1zM1 4H13M4 6H15V14H4zM10 11H15"/></svg>图纸</span><span></span><span></span><span></span></div>
        <div class="tree-row lv1"><span class="c-name"><i class="exp minus"></i><svg class="q" viewBox="0 0 10 16"><use href="#qmark"/></svg><svg class="ti" viewBox="0 0 16 16"><path class="k" d="M1 2H15V14H1zM9 11H15V14M9 11V14"/></svg>工作表 "body0" (工作...</span><span></span><span></span><span></span></div>
        <div class="tree-row lv2"><span class="c-name"><i class="exp none"></i><svg class="q" viewBox="0 0 10 16"><use href="#qmark"/></svg><svg class="ti" viewBox="0 0 16 16"><path d="M1 1H6V15H1z" fill="#999"/><path class="k" d="M1 1H15V15H1z"/><circle class="k" cx="9" cy="9" r="4"/></svg>导入的 "Top@6"</span><span></span><span></span><span></span></div>
        <div class="tree-row lv2"><span class="c-name"><i class="exp none"></i><svg class="q" viewBox="0 0 10 16"><use href="#qmark"/></svg><svg class="ti" viewBox="0 0 16 16"><path d="M1 1H6V15H1z" fill="#999"/><path class="k" d="M1 1H15V15H1z"/><circle class="k" cx="9" cy="9" r="4"/></svg>导入的 "Top@9"</span><span></span><span></span><span></span></div>
        <div class="tree-row lv2"><span class="c-name"><i class="exp none"></i><svg class="q" viewBox="0 0 10 16"><use href="#qmark"/></svg><svg class="ti" viewBox="0 0 16 16"><path class="c" d="M1 1H15V10H1z"/><circle class="c" cx="8" cy="5" r="2"/><path class="o" d="M1 11H15V15H1zM6 11V15M10 11V15"/></svg>投影 "ORTHO@7"</span><span></span><span></span><span></span></div>
        <div class="tree-row lv2"><span class="c-name"><i class="exp none"></i><svg class="q" viewBox="0 0 10 16"><use href="#qmark"/></svg><svg class="ti" viewBox="0 0 16 16"><path class="c" d="M1 1H15V10H1z"/><circle class="c" cx="8" cy="5" r="2"/><path class="o" d="M1 11H15V15H1zM6 11V15M10 11V15"/></svg>投影 "ORTHO@8"</span><span></span><span></span><span></span></div>
        <div class="tree-row lv1"><span class="c-name"><i class="exp plus"></i><svg class="q" viewBox="0 0 10 16"><use href="#qmark"/></svg><svg class="ti" viewBox="0 0 16 16"><path class="k" d="M1 14V3H6L7 5H13V7M1 14H13L15 7H3z"/></svg>过时</span><span></span><span></span><span></span></div>
        <div class="tree-fill"></div>
      </div>
    </div>
  </section>

  <section class="canvas">
    <div class="tabstrip">
      <div class="sheet-tab"><div class="blur"></div></div>
    </div>
    <div class="sheet">
      <svg class="drawing" viewBox="492 313 1705 811" width="1705" height="811">
        <path class="cl" d="M569 313V1124M1497 313V1124"/>

        <!-- view top left -->
        <g>
          <rect class="th" x="701" y="445" width="217" height="165"/>
          <path class="ln" d="M715 445V610M719 445V610M900 445V610M905 445V610"/>
          <path class="ln" d="M701 449H715M701 483H715M701 488H715M701 492H715M701 502H715M701 506H715M701 509H715M701 524H715M701 536H715M701 604H715"/>
          <path class="ln" d="M905 449H918M905 483H918M905 488H918M905 492H918M905 502H918M905 506H918M905 509H918M905 524H918M905 536H918M905 604H918"/>
          <ellipse class="ln" cx="774" cy="562" rx="37" ry="37"/>
          <ellipse class="md" cx="774" cy="562" rx="28.500" ry="28"/>
          <ellipse class="md" cx="774" cy="562" rx="15.500" ry="15"/>
        </g>

        <!-- view top right -->
        <g>
          <path class="th" d="M1037 445H1365V610H1231L1213 603 1100 536 1094 528 1092 522V510L1096 506H1148L1153 502V493L1148 488H1037L1032 484V449z"/>
          <path class="ln" d="M1347 445V610"/>
          <path class="hid" d="M1352 445V610"/>
          <path class="gr" d="M1340 533V542M1340 545 1345 545M1340 557V575M1344 557V575M1340 582V590H1345M1351 525 1356 535 1358 530M1360 585 1364 590"/>
        </g>

        <!-- view bottom left, coordinates from the 3x crop -->
        <g class="zoomed">
          <path class="th" d="M46 160H76V1090Q76 1124 90 1124H480Q490 1124 490 1100V160H518V1100Q518 1163 480 1163H85Q46 1163 46 1100z"/>
          <path class="ln" d="M46 172H76M46 178H76M46 343H76M46 350H76M46 364H76M48 526H60M60 514H72M46 710H76M46 763H76M490 172H518M490 178H518M490 343H518M490 350H518M490 364H518M492 526H504M504 514H516M490 710H518M490 763H518"/>
          <path class="md" d="M125 1124Q138 1118 140 1095Q142 1082 148 1082H265Q270 1082 272 1095Q272 1118 283 1124"/>
          <path class="ln" d="M142 1097H270"/>
          <path class="gr" d="M173 1085 168 1120M238 1085 240 1105M158 1140 145 1158M243 1130 255 1145M125 1160V1165M270 1155 285 1165"/>
        </g>

        <!-- iso view -->
        <g class="zoomed">
          <path class="th" d="M968 345V150L1013 63 1038 78V685L1250 820M994 162V378L990 405 975 420 968 395V345M968 150 994 162 1038 78"/>
          <path class="th" d="M835 770 915 370Q925 330 945 300L970 318Q950 340 942 385L862 740V1020"/>
          <path class="th" d="M835 770V990Q838 1025 860 1040L1210 1258Q1228 1268 1238 1250L1420 918V312L1397 298 1352 378V590L1357 655 1372 625 1375 392 1420 312M1352 378 1375 392"/>
          <path class="md" d="M862 1015 1210 1230 1216 1235V1005L1300 600Q1308 565 1328 535L1355 550Q1335 575 1325 620L1243 1020V1215L1238 1250"/>
          <path class="md" d="M1038 690 862 1010M1045 700 870 1020"/>
          <path class="ln" d="M842 725 862 740M838 770 860 785M918 370 942 385M930 335 952 350M1225 965 1245 975M1218 1000 1243 1015M1300 600 1325 615M1310 565 1335 580M1350 595 1372 625M950 380 975 420"/>
          <path class="hid" d="M1013 100V670L860 960M1395 325V900L1235 1200M1040 720 1395 905 1210 1250M1380 930 1225 1230M860 960V1010M1015 670 1030 690"/>
          <ellipse class="ln" cx="1024" cy="985" rx="80" ry="90"/>
          <ellipse class="md" cx="1024" cy="968" rx="62" ry="68"/>
          <ellipse class="ln" cx="1024" cy="962" rx="55" ry="62"/>
          <ellipse class="md" cx="1024" cy="965" rx="34" ry="38"/>
          <ellipse class="ln" cx="1024" cy="962" rx="28" ry="32"/>
          <path class="hid" d="M944 985C945 1070 1000 1105 1040 1098 1080 1090 1098 1060 1104 1030"/>
        </g>
      </svg>

      <div class="floatbar">
        <svg class="float-ico" viewBox="0 0 47 47"><circle cx="23.500" cy="23.500" r="18" fill="none" stroke="#555" stroke-width="1.200"/><path d="M23.500 0V16M23.500 31V47M0 23.500H16M31 23.500H47M18 10 23.500 16 29 10M18 37 23.500 31 29 37M10 18 16 23.500 10 29M37 18 31 23.500 37 29" fill="none" stroke="#333" stroke-width="1.200"/><path d="M23.500 16 31 23.500 23.500 31 16 23.500z" fill="#f6921e" stroke="#d86a00"/></svg>
        <i class="caret f1"></i>
        <i class="f-sep"></i>
        <i class="caret f2"></i>
      </div>

      <div class="dialog">
        <div class="dlg-title">
          <svg class="dlg-gear" viewBox="0 0 32 32"><circle cx="16" cy="16" r="9" fill="none" stroke="#fff" stroke-width="5"/><path d="M16 1V7M16 25V31M1 16H7M25 16H31M6 6 10 10M22 22 26 26M26 6 22 10M10 22 6 26" stroke="#fff" stroke-width="4"/></svg>
          <span class="dlg-name">信息</span>
          <span class="dlg-btn help">?</span>
          <span class="dlg-btn min"></span>
          <span class="dlg-btn max"></span>
          <span class="dlg-btn close">✕</span>
        </div>
        <div class="dlg-tools">
          <span class="dt"><svg viewBox="0 0 28 28"><path class="k" d="M2 2H19L23 6V12M2 2V26H13M7 2V9H17V2M6 16H14M6 20H11"/><path d="M13 26 15 20 25 10 28 13 18 23z" fill="#ddd" stroke="#444"/></svg></span>
          <span class="dt"><svg viewBox="0 0 28 28"><path class="k" d="M8 10V2H21V10M4 10H25V21H21V26H8V21H4zM8 16H21V26M8 16V21M4 13H25"/></svg></span>
          <span class="dt"><svg viewBox="0 0 28 28"><path class="k" d="M22 2 9 17M6 4 20 17M7 17a4 5 0 1 0 .1 0M20 17a4 5 0 1 0 .1 0"/></svg></span>
          <span class="dt"><svg viewBox="0 0 28 28"><path class="k" d="M4 2H15V20H4zM10 8H18L24 14V27H10zM18 8V14H24"/></svg></span>
          <span class="dt"><svg viewBox="0 0 28 28"><path class="k" d="M3 6H18V26H3zM7 6V2H14V6M10 12H19L25 17V27H10zM19 12V17H25"/></svg></span>
          <span class="dt"><svg viewBox="0 0 28 28"><path class="g" d="M5 4 23 26M23 4 5 26"/></svg></span>
          <span class="dt"><svg viewBox="0 0 28 28"><path class="o" d="M8 3H4V25H8M20 3H24V25H20"/><circle class="k" cx="14" cy="14" r="6"/><path class="k" d="M14 4V24M7 14H21"/></svg></span>
          <span class="dt"><svg viewBox="0 0 28 28"><path class="k" d="M9 2H12V8L14 12V26H3V14L9 8zM19 2H16V8L14 12M19 2V8L25 14V26H14M3 18H14M14 18H25"/></svg></span>
          <span class="dt on"><svg viewBox="0 0 28 28"><rect x="3" y="2" width="22" height="25" fill="#fff" stroke="#111" stroke-width="1.300"/><path class="k" d="M6 8H22M6 13H22M6 18H22V22H12M15 19 12 22 15 25"/></svg></span>
          <span class="dt"><svg viewBox="0 0 28 28"><path class="g" d="M6 14H22"/></svg></span>
        </div>
        <div class="info-frame">
          <div class="info-body">
            <div class="info-scroll">
              <div class="info-panel">
                <div class="info-head"><span>NX 版本信息</span><i class="collapse"></i></div>
                <table class="info-table">
                  <tr><th>版本</th><td>1942</td></tr>
                  <tr><th>部件文件兼容性</th><td>保存的部件可以在 1926 或更高版本中打开。</td></tr>
                  <tr><th>内部版本</th><td>2801</td></tr>
                  <tr><th>通道</th><td>主要</td></tr>
                  <tr><th>Parasolid 版本</th><td>32.1 (build 212)</td></tr>
                  <tr><th>服务器 ID</th><td>1002010 - *SolidSQUAD*</td></tr>
                  <tr><th>节点名</th><td>sc-202006162132</td></tr>
                  <tr><th>机器类型</th><td>GenuineIntel Family 6 Model 14 Stepping 12, Intel(R) Core(TM) i9-9900K CPU @ 3.60GHz</td></tr>
                  <tr><th>已分配的最大内存</th><td>375 MB</td></tr>
                  <tr><th>当前分配的内存</th><td>365 MB (59341 MB 为可能的最大值)</td></tr>
                  <tr><th>物理内存</th><td>32699 MB</td></tr>
                  <tr><th>总的可用虚拟空间</th><td>65467 MB</td></tr>
                  <tr><th>总的空闲的虚拟空间</th><td>58976 MB</td></tr>
                  <tr><th>显示节点</th><td>不可用</td></tr>
                  <tr><th>操作系统版本</th><td>Windows NT (x64) 6.3 Windows 10 Pro (Build 18363)</td></tr>
                  <tr><th>最大的 Parasolid Undo 字节数</th><td>RAM 1073741824</td></tr>
                  <tr><th>实际的 Parasolid Undo 字节数</th><td>RAM 12838, DISK 0, TOTAL 12838</td></tr>
                  <tr><th>日志文件</th><td class="nowrap">C:\Users\ADMINI~1\AppData\Local\Temp\Administratord447274.syslog</td></tr>
                  <tr><th>许可证文件发行商</th><td>UGS</td></tr>
                  <tr><th>Webkey 访问码</th><td>5555555555</td></tr>
                  <tr><th>使用中的捆绑程序数</th><td></td></tr>
                  <tr><th>使用中的附加特征</th><td></td></tr>
                </table>
              </div>
              <div class="info-panel next"><span>···</span></div>
            </div>
            <div class="vscroll"><i class="arr up"></i><i class="thumb"></i><i class="arr down"></i></div>
          </div>
          <div class="hscroll"><i class="arr left"></i><i class="thumb"></i><i class="arr right"></i></div>
        </div>
      </div>

      <div class="watermark">
        <svg class="wm-logo" viewBox="42 25 216 248" width="72" height="83">
          <path d="M150 28 190 50 130 72 92 100 45 175V85z" fill="#cde9f8"/>
          <path d="M192 52 255 85V150C255 170 248 135 232 110 220 90 205 72 192 52z" fill="#7fc8ec"/>
          <path d="M255 135V210L150 270 100 240C150 245 210 220 255 135z" fill="#6fc0e8"/>
          <path d="M45 150V210L110 250C85 210 70 180 88 118z" fill="#8ccdee"/>
          <path d="M150 96 197 122 150 150 103 122z" fill="#b3d9ef"/>
          <path d="M103 122 150 150V204L103 178z" fill="#8fc6e6"/>
          <path d="M197 122 150 150V204L197 178z" fill="#5fa9d8"/>
          <path d="M150 82 213 118V182L150 218 90 182V118z" fill="none" stroke="#d9d9d9" stroke-width="9"/>
        </svg>
        <div class="wm-text">
          <span class="wm-big">3D世界网</span>
          <span class="wm-small">WWW.3DSJW.COM</span>
        </div>
      </div>
    </div>
  </section>
</main>

</body>
</html>
```

FILE: styles.css
```css
* {
  box-sizing: border-box;
}

html, body {
  margin: 0;
  height: 1124px;
  overflow: hidden;
}

body {
  width: 2197px;
  background: #f0f0f0;
  font-family: "Liberation Sans", "Noto Sans CJK SC", sans-serif;
  font-size: 14px;
  color: #222;
}

.defs { position: absolute; }

i { display: block; font-style: normal; }

/* icon stroke colours */
svg { stroke-width: 1.2; overflow: hidden; }
.o { stroke: #f07c00; fill: none; }
.c { stroke: #00a8cf; fill: none; }
.k { stroke: #222; fill: none; }
.g { stroke: #777; fill: none; }
.r { stroke: #c00000; fill: none; }
.grayl { stroke: #b8b8b8; fill: none; }
.w { stroke: #fff; fill: none; stroke-width: 1.4; }
.d { stroke: #3f8bab; fill: none; stroke-width: 1.4; }
.sw2 { stroke-width: 2; }
.tx-o { fill: #f07c00; font-family: "Liberation Sans", sans-serif; }
.tx-k { fill: #111; font-family: "Liberation Sans", sans-serif; }
.tx-r { fill: #c00000; font-family: "Liberation Sans", sans-serif; }
.tx-b { fill: #1a3aa0; font-family: "Liberation Serif", serif; }
.tilt { transform: translate(6px, 25px) rotate(-48deg); }

.caret {
  width: 0;
  height: 0;
  border-left: 4px solid transparent;
  border-right: 4px solid transparent;
  border-top: 5px solid #222;
}

/* title + tabs */
.appbar {
  height: 73px;
  background: linear-gradient(90deg, #07658e, #2a82a3);
  color: #fff;
}

.titlerow {
  height: 37px;
  display: flex;
  align-items: center;
}

.logo {
  margin-left: -5px;
  width: 33px;
  font: bold 24px "Liberation Sans", sans-serif;
}

.qa-sep {
  width: 1px;
  height: 28px;
  background: #0d4f6d;
  margin: 0 0 0 6px;
}
.qa-sep.s1 { margin-left: 9px; }
.qa-sep.s2 { margin-left: 8px; }
.qa-sep.s3 { margin-left: 8px; }
.qa-sep.s4 { margin-left: 8px; }
.qa-sep.s5 { margin-left: 8px; }

.qa { height: 32px; flex: none; }
.w-save { width: 24px; margin-left: 11px; height: 30px; }
.w-undo { width: 24px; margin-left: 7px; height: 30px; }
.w-redo { width: 24px; margin-left: 9px; height: 30px; }
.w-tool { width: 24px; margin-left: 9px; height: 30px; }
.w-tool.g1 { margin-left: 10px; }
.w-tool.w-win1 { margin-left: 6px; }
.w-star { width: 18px; height: 20px; margin-left: 10px; }
.w-win { width: 24px; height: 34px; margin-left: 10px; }

.qa-caret {
  width: 0;
  height: 0;
  margin-left: 12px;
  border-left: 4px solid transparent;
  border-right: 4px solid transparent;
  border-top: 5px solid #fff;
}
.qa-caret.dim { border-top-color: #4f93ad; margin-left: 10px; margin-right: -3px; }
.qa-caret.c1 { margin-left: 6px; }

.qa-text { font-size: 14px; margin-left: 4px; }

.qa-more {
  width: 8px;
  height: 7px;
  margin-left: 10px;
  border-top: 1.500px solid #fff;
  position: relative;
}
.qa-more::after {
  content: "";
  position: absolute;
  left: 0;
  top: 2px;
  border-left: 4px solid transparent;
  border-right: 4px solid transparent;
  border-top: 5px solid #fff;
}

.apptitle {
  position: absolute;
  left: 1424px;
  top: 7px;
  font-size: 15.500px;
}

.tabrow {
  height: 36px;
  display: flex;
  align-items: stretch;
  position: relative;
}

.tab {
  padding: 0 16px;
  font-size: 16px;
  line-height: 34px;
  white-space: nowrap;
  border-bottom: 3px solid transparent;
}
.tab.first { width: 88px; padding: 0 0 0 9px; }
.tab.active { color: #ffd24d; border-bottom-color: #ffcc4d; }

.search {
  margin-left: auto;
  width: 33px;
  height: 26px;
  margin-top: 4px;
  background: #fff;
  color: #888;
  font-size: 16px;
  line-height: 24px;
  padding-left: 1px;
  border: 1px solid #ccc;
  white-space: nowrap;
  overflow: hidden;
}

/* ribbon */
.ribbon {
  height: 126px;
  padding-top: 5px;
  display: flex;
  border-bottom: 2px solid #c4c4c4;
  overflow: hidden;
}

.rgroup {
  flex: none;
  height: 116px;
  border-right: 2px solid #cfcfcf;
  display: flex;
  flex-direction: column;
}
.g-sheet { width: 87px; }
.g-view { width: 468px; padding-left: 12px; }
.g-dim { width: 284px; padding-left: 8px; }
.g-note { width: 314px; padding-left: 8px; }
.g-sketch { width: 71px; }
.g-table { width: 61px; }
.g-show { width: 84px; }
.g-std { width: 150px; }
.g-gc { width: 578px; padding-left: 3px; }
.g-last { width: 120px; border-right: 0; padding-left: 3px; }

.rbody {
  height: 102px;
  display: flex;
  align-items: flex-start;
}

.rfoot {
  height: 14px;
  display: flex;
  align-items: center;
  line-height: 14px;
}
.g-view .rfoot { margin-left: -12px; }
.g-dim .rfoot, .g-note .rfoot { margin-left: -8px; }
.g-gc .rfoot, .g-last .rfoot { margin-left: -3px; }
.rfoot .caret { margin-right: 9px; flex: none; }

.rlabel {
  flex: 1;
  text-align: center;
  color: #0a6f96;
  font-size: 14px;
  white-space: nowrap;
}
.g-sheet .rlabel { text-align: left; padding-left: 13px; }
.std .rlabel { text-align: left; padding-left: 1px; overflow: hidden; }
.g-last .rlabel { text-align: left; padding-left: 96px; }

.bigbtn {
  flex: none;
  display: flex;
  flex-direction: column;
  align-items: center;
  padding-top: 2px;
  line-height: 16px;
  white-space: nowrap;
}
.bigbtn > .caret { margin-top: 6px; }
.big { width: 48px; height: 48px; margin-bottom: 7px; flex: none; }
.b-new { width: 86px; padding-left: 2px; }
.b-wizard { width: 86px; }
.b-basic { width: 60px; margin-left: 9px; }
.b-update { width: 66px; margin-left: 1px; }
.b-dim { width: 60px; }
.b-note { width: 60px; }
.b-show { width: 66px; margin-left: 8px; }

.bigA {
  height: 48px;
  margin-bottom: 7px;
  font: 68px/52px "Liberation Serif", serif;
  color: #f07c00;
  position: relative;
}
.brush {
  position: absolute;
  left: 20px;
  top: 16px;
  width: 30px;
  height: 34px;
}

.smallgrid {
  flex: none;
  display: grid;
  grid-auto-rows: 48px;
  padding-top: 6px;
  justify-items: center;
}
.cols5 { grid-template-columns: repeat(5, 44px); margin-left: 1px; }
.cols2 { grid-template-columns: repeat(2, 42px); margin-left: 1px; }
.g-view .cols5 { margin-left: 5px; }

.i { width: 32px; height: 32px; flex: none; display: block; }

.note-more { margin: 70px 0 0 7px; }

.sketchbox {
  width: 34px;
  height: 96px;
  margin: 1px 0 0 9px;
  background: #fafafa;
  border: 2px solid #cfcfcf;
  display: flex;
  flex-direction: column;
  justify-content: space-around;
  align-items: center;
}
.i-s { width: 28px; height: 30px; }

.sketchspin {
  margin-left: 7px;
  height: 96px;
  display: flex;
  flex-direction: column;
  justify-content: space-around;
}
.caret.up { border-top: 0; border-bottom: 7px solid #aaa; }
.caret.more { border-top: 6px solid #222; position: relative; }
.caret.more::before {
  content: "";
  position: absolute;
  left: -4px;
  top: -9px;
  width: 8px;
  height: 1.500px;
  background: #222;
}

.tablecol {
  margin: 7px 0 0 14px;
  display: flex;
  flex-direction: column;
  gap: 15px;
}

.toolcol { flex-direction: column; padding-top: 6px; }
.toolrow { height: 48px; display: flex; align-items: flex-start; }
.g-std .toolrow { padding-left: 3px; }
.t {
  flex: none;
  width: 34px;
  height: 32px;
  display: flex;
  justify-content: center;
  align-items: center;
}
.t .i { width: 30px; height: 30px; }
.tsep {
  flex: none;
  width: 1px;
  height: 28px;
  margin: 2px 3px;
  background: #c4c4c4;
}

.xx { font: bold 17px "Liberation Sans", sans-serif; color: #111; }
.tol { font-size: 14px; color: #111; line-height: 15px; margin-left: 10px; white-space: nowrap; display: block; width: 34px; }
.tol b { display: block; color: #c00000; font-weight: normal; }

/* second toolbar */
.toolbar2 {
  height: 61px;
  padding: 0 0 0 8px;
  display: flex;
  align-items: center;
  border-bottom: 2px solid #b4b4b4;
}
.hamb { width: 30px; height: 30px; flex: none; }
.tb-text { font-size: 14px; white-space: nowrap; }
.tb-sep { width: 2px; height: 52px; background: #cfcfcf; flex: none; }
.tb-ico { width: 48px; height: 48px; flex: none; }
.tb-box { width: 46px; height: 48px; flex: none; }
.toolbar2 .caret { flex: none; }
.ml4 { margin-left: 4px; }
.ml5 { margin-left: 5px; }
.ml8 { margin-left: 8px; }
.ml10 { margin-left: 10px; }
.ml11 { margin-left: 11px; }
.ml12 { margin-left: 12px; }
.ml13 { margin-left: 13px; }
.ml14 { margin-left: 14px; }
.ml15 { margin-left: 15px; }

.combo {
  flex: none;
  height: 26px;
  background: #fff;
  border: 1px solid #666;
  display: flex;
  align-items: center;
  justify-content: space-between;
  padding: 0 5px 0 3px;
  margin-top: 0;
}
.combo .caret { margin-left: auto; border-left-width: 5px; border-right-width: 5px; border-top-width: 6px; }
.combo.wide { width: 181px; }
.combo.asm { width: 192px; }
.combo.asm b { font-size: 14px; font-weight: bold; color: #111; }
.combo.layer { width: 58px; }

/* status */
.status {
  height: 22px;
  line-height: 20px;
  font-size: 14px;
  font-weight: bold;
  color: #111;
  white-space: nowrap;
  overflow: hidden;
}
.status span { margin-left: -7px; display: block; }

/* main area */
.work {
  height: 842px;
  display: flex;
}

.sidebar {
  flex: none;
  width: 29px;
  background: #bdbdbd;
  border-right: 1px solid #999;
  display: flex;
  flex-direction: column;
}
.side { width: 28px; flex: none; display: block; overflow: visible; height: auto; }
.s-gear { background: #c6c6c6; }
.s-part { background: #c6c6c6; border-bottom: 1px solid #999; }

.nav {
  flex: none;
  width: 461px;
  padding: 0 7px 0 6px;
  background: #f0f0f0;
  border-right: 2px solid #777;
  display: flex;
  flex-direction: column;
}

.nav-head {
  height: 31px;
  display: flex;
  align-items: center;
  justify-content: space-between;
  padding: 0 9px 2px 3px;
  font-size: 15px;
}
.nav-max {
  width: 14px;
  height: 13px;
  border: 1.500px solid #222;
  border-top-width: 2px;
}

.tree {
  flex: 1;
  border: 1px solid #b0b0b0;
  border-bottom: 0;
  width: 445px;
  background: #fbfbfb;
  overflow: hidden;
  font-family: "Noto Sans", "Noto Sans CJK SC", sans-serif;
}

.tree-row {
  display: grid;
  grid-template-columns: 251px 73px 58px 60px;
  height: 24px;
  line-height: 24px;
  font-size: 15px;
  color: #333;
  border-bottom: 1px solid #e2e2e2;
}
.tree-row > span { border-right: 1px solid #e6e6e6; white-space: nowrap; overflow: hidden; }
.tree-row:nth-child(odd) { background: #f5f5f5; }
.tree-row .c-name { display: flex; align-items: center; }
.tree-row.head { background: #f5f5f5; border-bottom: 1px solid #d8d8d8; }
.tree-row.head > span { padding-left: 6px; }
.tree-row.head .c-name { padding-left: 7px; }
.tree-row.lv0 .c-name { padding-left: 4px; }
.tree-row.lv1 .c-name { padding-left: 23px; }
.tree-row.lv2 .c-name { padding-left: 42px; }

.sort {
  margin-left: 18px;
  width: 0;
  height: 0;
  border-left: 6px solid transparent;
  border-right: 6px solid transparent;
  border-bottom: 6px solid #222;
}

.tree-body { position: relative; }
.tree-lines { position: absolute; left: 0; top: 0; z-index: 1; pointer-events: none; }

.exp {
  flex: none;
  width: 11px;
  height: 11px;
  margin-right: 7px;
  border: 1px solid #a8a8a8;
  background: #fff;
  position: relative;
  z-index: 2;
}
.exp.none { border: 0; background: none; }
.exp.minus::before, .exp.plus::before {
  content: "";
  position: absolute;
  left: 1px;
  top: 4px;
  width: 7px;
  height: 1px;
  background: #222;
}
.exp.plus::after {
  content: "";
  position: absolute;
  left: 4px;
  top: 1px;
  width: 1px;
  height: 7px;
  background: #222;
}
.q { width: 10px; height: 16px; margin-right: 3px; flex: none; }
.ti { width: 16px; height: 16px; margin-right: 3px; flex: none; }

.tree-fill {
  height: 620px;
  background:
    linear-gradient(#e6e6e6, #e6e6e6) 250px 0 / 1px 100% no-repeat,
    linear-gradient(#e6e6e6, #e6e6e6) 323px 0 / 1px 100% no-repeat,
    linear-gradient(#e6e6e6, #e6e6e6) 381px 0 / 1px 100% no-repeat,
    linear-gradient(#e6e6e6, #e6e6e6) 441px 0 / 1px 100% no-repeat,
    repeating-linear-gradient(#f5f5f5 0 23px, #e4e4e4 23px 24px, #fbfbfb 24px 47px, #e4e4e4 47px 48px);
}

/* canvas */
.canvas {
  flex: 1;
  display: flex;
  flex-direction: column;
  min-width: 0;
  margin-left: -1px;
}

.tabstrip {
  height: 30px;
  flex: none;
  border-bottom: 2px solid #006089;
}

.sheet-tab {
  width: 309px;
  height: 30px;
  background: #006089;
  padding: 0 4px;
}

.blur {
  height: 31px;
  margin-top: -1px;
  width: 301px;
  margin-left: -1px;
  border-radius: 14px;
  background:
    linear-gradient(#bdd2dc 0 4px, transparent 4px),
    linear-gradient(transparent 19px, rgba(0, 50, 80, .42) 19px),
    linear-gradient(90deg,
      #4b7890 0 18px, #2f7c9f 18px 33px, #4a8aa8 33px 48px, #4086a7 48px 63px, #46849f 63px 78px,
      #2b7a9c 78px 93px, #37799a 93px 108px, #41849f 108px 123px, #4f8ea9 123px 138px, #2b7699 138px 153px,
      #4c8ca9 153px 183px, #5a93ad 183px 198px, #2e7b9e 198px 228px, #1e7198 228px 243px, #3e83a0 243px 258px,
      #297599 258px 288px, #2e7a9c 288px);
}

.sheet {
  flex: 1;
  position: relative;
  background: #000;
  border-top: 1px solid #8a8a8a;
  border-left: 2px solid #8a8a8a;
  overflow: hidden;
}

.drawing { position: absolute; left: 0; top: 0; display: block; }
.drawing path, .drawing rect, .drawing ellipse { fill: none; vector-effect: non-scaling-stroke; }
.zoomed { transform: translate(680px, 670px) scale(.4591, .33333); }
.th { stroke: #fff; stroke-width: 2; }
.md { stroke: #fff; stroke-width: 1.600; }
.ln { stroke: #eee; stroke-width: 1.200; }
.gr { stroke: #999; stroke-width: 1; }
.hid { stroke: #999; stroke-width: 1; stroke-dasharray: 9 6; }
.cl { stroke: #b0b0b0; stroke-width: 1; stroke-dasharray: 12 5 2 5; }

.floatbar {
  position: absolute;
  left: 972px;
  top: 4px;
  width: 109px;
  height: 60px;
  background: #f0f0f0;
  border-bottom: 1px solid #bbb;
  display: flex;
  align-items: center;
  padding-left: 15px;
}
.float-ico { width: 47px; height: 47px; flex: none; }
.caret.f1 { margin: -2px 0 0 5px; }
.f-sep { width: 1px; height: 52px; background: #bbb; margin-left: 14px; }
.caret.f2 { margin: 36px 0 0 5px; }

/* info window */
.dialog {
  position: absolute;
  left: 906px;
  top: 97px;
  width: 800px;
  height: 693px;
  background: #dcdcdc;
}

.dlg-title {
  height: 33px;
  background: #006089;
  color: #fff;
  display: flex;
  align-items: center;
  padding-left: 8px;
  font-size: 15px;
}
.dlg-gear { width: 14px; height: 14px; flex: none; }
.dlg-name { margin-left: 9px; flex: none; white-space: nowrap; }
.dlg-btn { position: relative; flex: none; font-weight: bold; }
.dlg-btn.help { margin-left: 651px; font-size: 17px; width: 25px; }
.dlg-btn.min { width: 8px; height: 2px; background: #fff; margin-top: 8px; }
.dlg-btn.max { margin-left: 18px; width: 12px; height: 12px; border: 1.500px solid #fff; border-top-width: 2px; }
.dlg-btn.close { margin-left: 14px; font-size: 14px; }

.dlg-tools {
  height: 39px;
  display: flex;
  gap: 2px;
  padding: 5px 0 0 11px;
}
.dt {
  flex: none;
  width: 32px;
  height: 31px;
  border: 1px solid #8a8a8a;
  background: #e2e2e2;
  display: flex;
  align-items: center;
  justify-content: center;
}
.dt svg { width: 27px; height: 27px; }
.dt .k { stroke: #555; }
.dt.on { background: #ffd966; border-color: #ffd966; }
.dt.on .k { stroke: #111; }

.info-frame {
  margin-left: 12px;
  height: 607px;
  border-top: 1px solid #666;
  border-left: 1px solid #666;
  border-bottom: 1px solid #666;
  display: flex;
  flex-direction: column;
}

.info-body {
  height: 592px;
  display: flex;
}

.info-scroll {
  width: 770px;
  flex: none;
  padding: 12px 0 0 9px;
  background: #ececec;
  overflow: hidden;
}

.info-panel {
  width: 751px;
  height: 556px;
  background: #f0f0f0;
  border: 1px solid #c8c8c8;
}
.info-panel.next {
  height: 30px;
  margin-top: 12px;
  padding-left: 10px;
  color: #2b7a9c;
  line-height: 16px;
}

.info-head {
  height: 45px;
  display: flex;
  align-items: flex-start;
  padding: 5px 6px 0 7px;
  font-size: 17px;
  line-height: 20px;
  color: #2b7a9c;
}
.collapse {
  width: 10px;
  height: 3px;
  margin: 4px 0 0 auto;
  background: #1a2fc4;
}

.info-table {
  width: 751px;
  margin-left: 9px;
  border-collapse: collapse;
  table-layout: fixed;
  background: #fafafa;
  font-size: 15px;
  line-height: 17px;
}
.info-table th, .info-table td {
  border: 1px solid #b8b8b8;
  padding: 1px 3px 3px;
  text-align: left;
  vertical-align: middle;
  height: 22px;
}
.info-table th { width: 281px; font-weight: bold; color: #111; white-space: nowrap; }
.info-table td { color: #333; }
.info-table td.nowrap { white-space: nowrap; overflow: hidden; }

.vscroll {
  flex: none;
  width: 16px;
  background: #f0f0f0;
  position: relative;
}
.vscroll .thumb {
  position: absolute;
  left: 1px;
  top: 17px;
  width: 14px;
  height: 80px;
  background: #c4c4c4;
}
.arr { position: absolute; width: 0; height: 0; }
.arr.up { left: 4px; top: 5px; border-left: 4px solid transparent; border-right: 4px solid transparent; border-bottom: 5px solid #bbb; }
.arr.down { left: 4px; bottom: 8px; border-left: 4px solid transparent; border-right: 4px solid transparent; border-top: 5px solid #555; }
.arr.left { left: 3px; top: 3px; border-top: 4px solid transparent; border-bottom: 4px solid transparent; border-right: 5px solid #aaa; }
.arr.right { right: 21px; top: 3px; border-top: 4px solid transparent; border-bottom: 4px solid transparent; border-left: 5px solid #444; }

.hscroll {
  flex: none;
  height: 13px;
  background: #f0f0f0;
  position: relative;
}
.hscroll .thumb {
  position: absolute;
  left: 16px;
  top: 0;
  width: 728px;
  height: 12px;
  background: #bdbdbd;
}

/* watermark */
.watermark {
  position: absolute;
  left: 1422px;
  top: 716px;
  display: flex;
  pointer-events: none;
}
.wm-logo { flex: none; }
.wm-text {
  margin-left: 9px;
  padding-top: 14px;
  display: flex;
  flex-direction: column;
  color: rgba(255, 255, 255, .55);
}
.wm-big { font-size: 41px; font-weight: bold; line-height: 42px; white-space: nowrap; }
.wm-small { font-size: 13px; font-weight: bold; line-height: 14px; letter-spacing: 3.500px; margin-top: 2px; white-space: nowrap; }
```
